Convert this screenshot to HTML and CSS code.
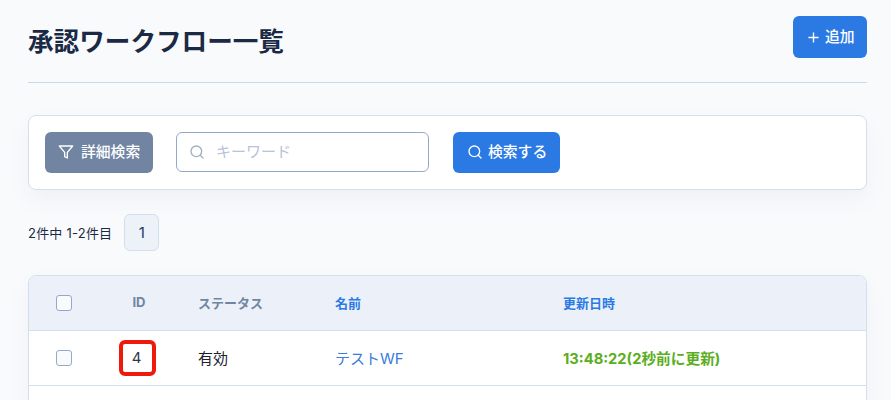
FILE: index.html
```html
<!DOCTYPE html>
<html lang="ja">
<head>
<meta charset="utf-8">
<title>承認ワークフロー一覧</title>
<link rel="stylesheet" href="styles.css">
</head>
<body>
<main class="page">
  <header class="page-head">
    <h1 class="title">承認ワークフロー一覧</h1>
    <button class="btn btn-add"><svg class="ico-plus" viewBox="0 0 12 12"><path d="M6 .5v11M.5 6h11"/></svg>追加</button>
  </header>
  <section class="search-card">
    <button class="btn btn-filter"><svg class="ico" viewBox="0 0 24 24"><path d="M22 3H2l8 9.46V19l4 2v-8.54L22 3z"/></svg>詳細検索</button>
    <label class="search-input"><svg class="ico" viewBox="0 0 24 24"><circle cx="11" cy="11" r="8"/><path d="M21 21l-4.35-4.35"/></svg><span class="placeholder">キーワード</span></label>
    <button class="btn btn-search"><svg class="ico" viewBox="0 0 24 24"><circle cx="11" cy="11" r="8"/><path d="M21 21l-4.35-4.35"/></svg>検索する</button>
  </section>
  <nav class="pager">
    <span class="count">2件中 1-2件目</span>
    <span class="page-num">1</span>
  </nav>
  <div class="table-wrap">
    <table class="table">
      <thead>
        <tr>
          <th class="c-check"><span class="box"></span></th>
          <th class="c-id">ID</th>
          <th class="c-status">ステータス</th>
          <th class="c-name link-head">名前</th>
          <th class="c-date link-head">更新日時</th>
        </tr>
      </thead>
      <tbody>
        <tr>
          <td class="c-check"><span class="box"></span></td>
          <td class="c-id"><span class="mark">4</span></td>
          <td class="c-status">有効</td>
          <td class="c-name"><a class="link">テストWF</a></td>
          <td class="c-date fresh">13:48:22(2秒前に更新)</td>
        </tr>
        <tr class="empty"><td colspan="5"></td></tr>
      </tbody>
    </table>
  </div>
</main>
</body>
</html>
```
FILE: styles.css
```css
* { box-sizing: border-box; }
html, body { margin: 0; height: 400px; overflow: hidden; }
body {
  background: #f9fafc;
  color: #1a202c;
  font-family: Inter, "Noto Sans CJK JP", sans-serif;
}
.page { padding: 16px 24px 0 28px; }
.page-head {
  display: flex;
  justify-content: space-between;
  align-items: flex-start;
  height: 67px;
  border-bottom: 1px solid #cbd9e8;
}
.title {
  margin: 9px 0 0;
  font-size: 25.6px;
  line-height: 34px;
  font-weight: 700;
  color: #1a2a44;
}
.btn {
  display: flex;
  align-items: center;
  border: 0;
  border-radius: 6px;
  color: #fff;
  font: 500 14.8px/20px Inter, "Noto Sans CJK JP", sans-serif;
  padding: 0 0 2px;
}
.btn-add { width: 74px; height: 42px; background: #2b7ae4; padding-left: 15px; padding-bottom: 0; gap: 6px; }
.ico-plus { width: 11px; height: 11px; fill: none; stroke: #fff; stroke-width: 1.5; }
.search-card {
  display: flex;
  align-items: flex-start;
  margin-top: 32px;
  height: 75px;
  padding: 16px;
  background: #fff;
  border: 1px solid #d3dfec;
  border-radius: 8px;
  box-shadow: 0 10px 20px rgba(110, 130, 170, .07);
}
.ico { width: 16px; height: 16px; fill: none; stroke: currentColor; stroke-width: 2; stroke-linecap: round; stroke-linejoin: round; flex: none; }
.btn-filter { width: 108px; height: 41px; background: #7185a3; padding-left: 13px; gap: 7px; }
.search-input {
  display: flex;
  align-items: center;
  margin-left: 23px;
  width: 253px;
  height: 40px;
  padding: 0 0 1px 12px;
  gap: 11px;
  border: 1px solid #94a9c9;
  border-radius: 6px;
  color: #a0aec0;
  background: #fff;
}
.placeholder { font-size: 15px; line-height: 20px; color: #b7c3d6; }
.btn-search { margin-left: 24px; width: 107px; height: 41px; background: #2b7ae4; padding-left: 14px; gap: 5px; }
.pager { display: flex; align-items: center; margin-top: 24px; gap: 12px; }
.count { font-size: 13px; letter-spacing: .22px; padding-bottom: 1px; color: #1a2a44; }
.page-num {
  display: flex;
  align-items: center;
  justify-content: center;
  width: 35px;
  height: 37px;
  font-size: 15px;
  color: #1f3a5f;
  background: #edf2f9;
  border: 1px solid #d3dfec;
  border-radius: 6px;
}
.table-wrap {
  margin-top: 24px;
  background: #fff;
  border: 1px solid #d3dfec;
  border-radius: 8px;
  overflow: hidden;
  box-shadow: 0 10px 20px rgba(110, 130, 170, .07);
}
.table { width: 100%; border-collapse: separate; border-spacing: 0; table-layout: fixed; }
th {
  height: 55px;
  padding: 0 0 2px;
  background: #ecf1f9;
  border-bottom: 1px solid #d3dfec;
  font-size: 13px;
  font-weight: 700;
  text-align: left;
  color: #7185a3;
}
td {
  height: 55px;
  padding: 0 0 2px;
  border-bottom: 1px solid #d3dfec;
  font-size: 15px;
  color: #1a202c;
}
th.c-check, td.c-check { width: 71px; padding: 0 0 0 27px; }
.c-id { width: 78px; text-align: center; }
td.c-id { padding: 0; }
.c-status { width: 157px; }
td.c-status, th.c-status { padding-left: 20px; }
.c-name { width: 228px; }
th.link-head { color: #2b7ae4; }
.box {
  display: block;
  width: 16px;
  height: 16px;
  background: #f9fafc;
  border: 1px solid #94a9c9;
  border-radius: 3px;
}
.mark {
  display: inline-block;
  width: 37px;
  height: 36px;
  margin-left: -3px;
  padding-right: 2px;
  line-height: 27px;
  border: 4px solid #ee1a0c;
  border-radius: 6px;
  text-align: center;
  vertical-align: middle;
  color: #2d3748;
}
.link { color: #3a7bdc; }
td.fresh { color: #5aae20; font-weight: 700; font-size: 14.7px; }
.empty td { height: 55px; border-bottom: 0; }
```
